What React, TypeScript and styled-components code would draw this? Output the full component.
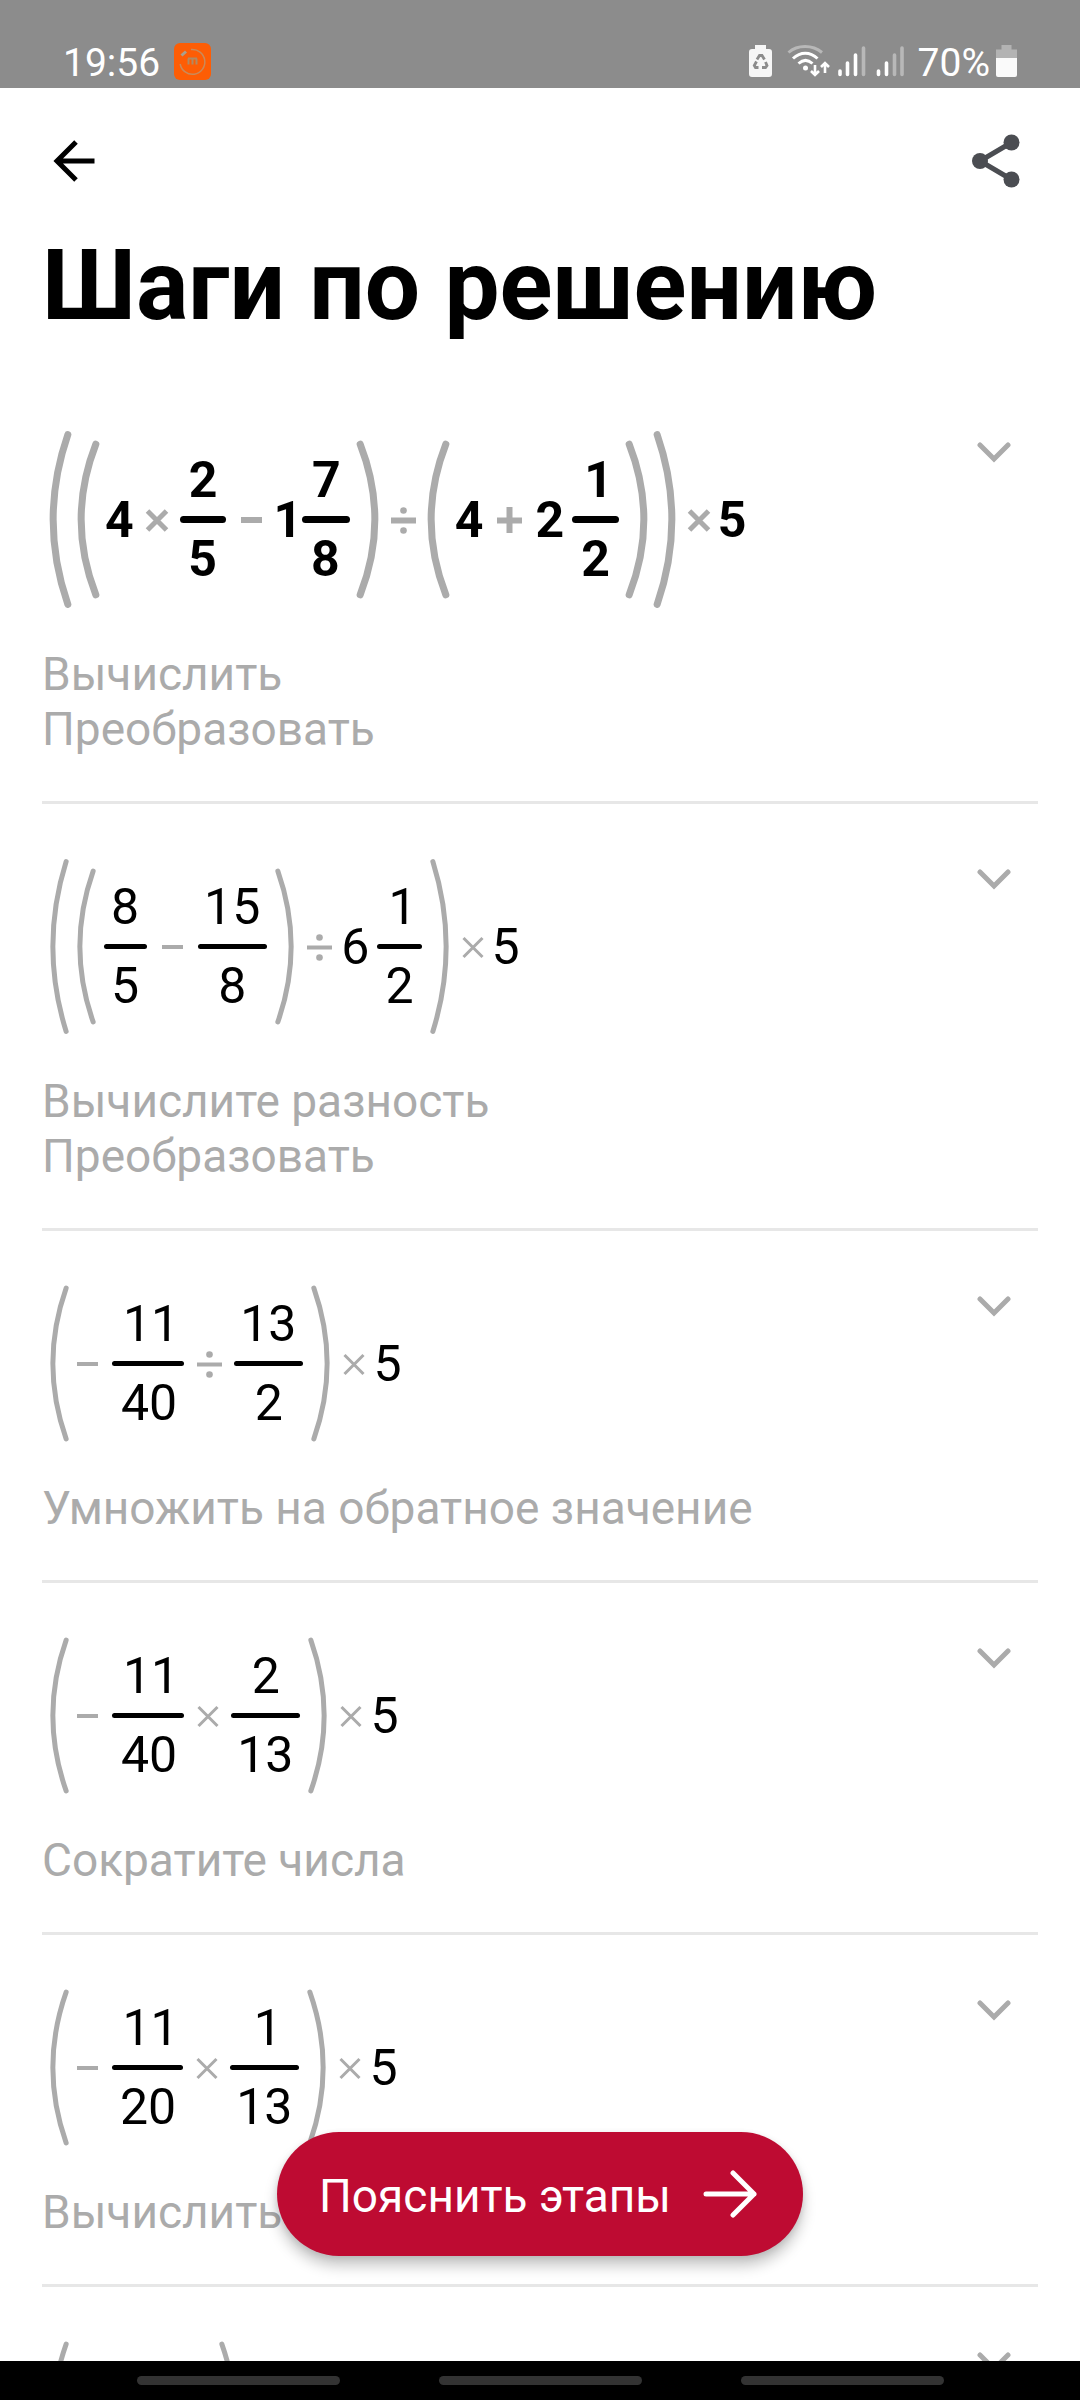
import React from "react";
import styled, { createGlobalStyle, css } from "styled-components";

const GlobalStyle = createGlobalStyle`
  * { box-sizing: border-box; }
  body { margin: 0; background: #fff; font-family: Roboto, "Noto Sans", sans-serif; color: #000; }
  button { border: 0; padding: 0; background: none; font: inherit; color: inherit; cursor: pointer; }
  svg { display: block; flex: none; }
`;

const muted = "#ababab";

const Screen = styled.div`
  position: relative;
  display: flex;
  flex-direction: column;
  height: 100vh;
  overflow: hidden;
`;

const StatusBar = styled.div`
  display: flex;
  flex: none;
  align-items: flex-end;
  justify-content: space-between;
  height: 88px;
  padding: 0 63px;
  background: #8c8c8c;
  color: #fff;
  font-size: 39px;
  line-height: 48px;
`;

const StatusGroup = styled.div`
  display: flex;
  align-items: center;
  height: 54px;
`;

const StatusText = styled.span`
  padding-top: 3px;
`;

const Clock = styled(StatusText)`
  margin-right: 14px;
`;

const Percent = styled(StatusText)`
  margin: 0 6px 0 14px;
`;

const TopBar = styled.header`
  display: flex;
  flex: none;
  align-items: center;
  justify-content: space-between;
  padding: 28px 52px 22px 42px;
`;

const IconButton = styled.button`
  display: flex;
  align-items: center;
  justify-content: center;
  width: 64px;
  height: 90px;
`;

const Content = styled.main`
  flex: 1;
  min-height: 0;
  padding: 0 42px;
  overflow: hidden;
`;

const Title = styled.h1`
  margin: 0;
  padding-bottom: 34px;
  font-size: 98px;
  font-weight: 700;
  line-height: 115px;
`;

const StepList = styled.ol`
  margin: 0;
  padding: 0;
  list-style: none;
`;

const StepItem = styled.li`
  display: flex;
  align-items: flex-start;
  justify-content: space-between;
  padding: 54px 0 44px;
  border-bottom: 3px solid #e7e7e7;
`;

const StepBody = styled.div`
  display: flex;
  flex-direction: column;
  gap: 39px;
`;

const Expand = styled.button`
  width: 88px;
  height: 42px;
  display: flex;
  align-items: center;
  justify-content: center;
`;

const Hint = styled.div`
  color: ${muted};
  font-size: 46px;
  line-height: 55px;
`;

const Expression = styled.div<{ $strong?: boolean }>`
  --stroke: ${(p) => (p.$strong ? "7px" : "5px")};
  --sign-stroke: ${(p) => (p.$strong ? "6px" : "4px")};
  --cross-stroke: ${(p) => (p.$strong ? "5px" : "3px")};
  --bar-gap: ${(p) => (p.$strong ? "7px" : "8px")};
  --bar-overhang: ${(p) => (p.$strong ? "11px" : "10px")};
  --paren-width: ${(p) => (p.$strong ? "21px" : "19px")};
  --paren-gap: ${(p) => (p.$strong ? "7px" : "8px")};
  display: flex;
  align-items: center;
  padding-left: 8px;
  font-size: 50px;
  font-weight: ${(p) => (p.$strong ? 700 : 400)};
  line-height: 58px;
`;

const Group = styled.div`
  display: flex;
  align-items: center;
`;

const GroupInner = styled.div`
  display: flex;
  align-items: center;
  padding: 10px var(--paren-gap);
`;

const Paren = styled.svg`
  align-self: stretch;
  width: var(--paren-width);
  height: auto;
  overflow: visible;
  fill: none;
  stroke: ${muted};
  stroke-linecap: round;
  path {
    stroke-width: var(--stroke);
    vector-effect: non-scaling-stroke;
  }
`;

const Frac = styled.div`
  display: flex;
  flex-direction: column;
  align-items: center;
`;

const FracPart = styled.div`
  padding: 0 var(--bar-overhang);
`;

const FracBar = styled.div`
  align-self: stretch;
  height: var(--stroke);
  margin: var(--bar-gap) 0;
  border-radius: 4px;
  background: #000;
`;

const Digits = styled.span<{ $left: number; $right: number }>`
  display: block;
  margin-left: -${(p) => p.$left}px;
  margin-right: -${(p) => p.$right}px;
`;

const Mixed = styled.div`
  display: flex;
  align-items: center;
  gap: 10px;
`;

const wide = css`
  margin: 0 15px;
`;
const narrow = css`
  margin: 0 12px 0 13px;
`;
const leading = css`
  margin: 0 14px 0 0;
`;

const Operator = styled.svg<{ $wide?: boolean; $leading?: boolean; $cross?: boolean }>`
  ${(p) => (p.$leading ? leading : p.$wide ? wide : narrow)}
  fill: none;
  stroke: ${muted};
  stroke-width: ${(p) => (p.$cross ? "var(--cross-stroke)" : "var(--sign-stroke)")};
  overflow: visible;
`;

const ExplainButton = styled.button`
  position: absolute;
  bottom: 144px;
  left: 50%;
  transform: translateX(-50%);
  display: flex;
  align-items: center;
  gap: 32px;
  height: 124px;
  padding: 0 46px 0 42px;
  border-radius: 62px;
  background: #be0b32;
  color: #fff;
  font-size: 46px;
  line-height: 56px;
  white-space: nowrap;
  box-shadow: 0 10px 14px rgba(0, 0, 0, 0.22), 0 2px 6px rgba(0, 0, 0, 0.1);
`;

const ExplainLabel = styled.span`
  padding-top: 4px;
`;

const NavBar = styled.nav`
  position: relative;
  display: flex;
  flex: none;
  align-items: center;
  justify-content: center;
  gap: 99px;
  height: 39px;
  background: #000;
`;

const NavPill = styled.button`
  width: 203px;
  height: 9px;
  border-radius: 5px;
  background: #333;
`;

/* Side bearings of the digits at 50px, trimmed so that gaps are measured from the ink. */
const bearings: Record<string, [number, number]> = {
  "0": [3, 3],
  "1": [4, 10],
  "2": [2, 2],
  "3": [2, 3],
  "4": [1, 1],
  "5": [4, 3],
  "6": [3, 2],
  "7": [1, 2],
  "8": [3, 2],
};

const Num = ({ v }: { v: string }) => (
  <Digits $left={bearings[v[0]][0]} $right={bearings[v[v.length - 1]][1]}>
    {v}
  </Digits>
);

const Fraction = ({ n, d }: { n: string; d: string }) => (
  <Frac>
    <FracPart>
      <Num v={n} />
    </FracPart>
    <FracBar />
    <FracPart>
      <Num v={d} />
    </FracPart>
  </Frac>
);

const MixedNumber = ({ w, n, d }: { w: string; n: string; d: string }) => (
  <Mixed>
    <Num v={w} />
    <Fraction n={n} d={d} />
  </Mixed>
);

const Parens = ({ children }: { children: React.ReactNode }) => (
  <Group>
    <Paren viewBox="0 0 20 100" preserveAspectRatio="none" aria-hidden="true">
      <path d="M17 2Q-11 50 17 98" />
    </Paren>
    <GroupInner>{children}</GroupInner>
    <Paren viewBox="0 0 20 100" preserveAspectRatio="none" aria-hidden="true">
      <path d="M3 2Q31 50 3 98" />
    </Paren>
  </Group>
);

const Times = () => (
  <Operator $cross width="22" height="24" viewBox="0 0 22 24" role="img" aria-label="×">
    <path d="M1.5 3L20.5 22M20.5 3L1.5 22" />
  </Operator>
);

const Minus = ({ leading }: { leading?: boolean }) => (
  <Operator $wide $leading={leading} width="21" height="24" viewBox="0 0 21 24" role="img" aria-label="−">
    <path d="M0 12H21" />
  </Operator>
);

const Plus = () => (
  <Operator $wide width="25" height="26" viewBox="0 0 25 26" role="img" aria-label="+">
    <path d="M0 13.5H25M12.5 0V26" />
  </Operator>
);

const Divide = () => (
  <Operator width="25" height="28" viewBox="0 0 25 28" role="img" aria-label="÷">
    <path d="M0 14.5H25" />
    <circle cx="12.5" cy="4.5" r="3.3" fill={muted} stroke="none" />
    <circle cx="12.5" cy="24.5" r="3.3" fill={muted} stroke="none" />
  </Operator>
);

type StepData = { strong?: boolean; expression: React.ReactNode; hints: string[] };

const steps: StepData[] = [
  {
    strong: true,
    expression: (
      <>
        <Parens>
          <Parens>
            <Num v="4" />
            <Times />
            <Fraction n="2" d="5" />
            <Minus />
            <MixedNumber w="1" n="7" d="8" />
          </Parens>
          <Divide />
          <Parens>
            <Num v="4" />
            <Plus />
            <MixedNumber w="2" n="1" d="2" />
          </Parens>
        </Parens>
        <Times />
        <Num v="5" />
      </>
    ),
    hints: ["Вычислить", "Преобразовать"],
  },
  {
    expression: (
      <>
        <Parens>
          <Parens>
            <Fraction n="8" d="5" />
            <Minus />
            <Fraction n="15" d="8" />
          </Parens>
          <Divide />
          <MixedNumber w="6" n="1" d="2" />
        </Parens>
        <Times />
        <Num v="5" />
      </>
    ),
    hints: ["Вычислите разность", "Преобразовать"],
  },
  {
    expression: (
      <>
        <Parens>
          <Minus leading />
          <Fraction n="11" d="40" />
          <Divide />
          <Fraction n="13" d="2" />
        </Parens>
        <Times />
        <Num v="5" />
      </>
    ),
    hints: ["Умножить на обратное значение"],
  },
  {
    expression: (
      <>
        <Parens>
          <Minus leading />
          <Fraction n="11" d="40" />
          <Times />
          <Fraction n="2" d="13" />
        </Parens>
        <Times />
        <Num v="5" />
      </>
    ),
    hints: ["Сократите числа"],
  },
  {
    expression: (
      <>
        <Parens>
          <Minus leading />
          <Fraction n="11" d="20" />
          <Times />
          <Fraction n="1" d="13" />
        </Parens>
        <Times />
        <Num v="5" />
      </>
    ),
    hints: ["Вычислить"],
  },
  {
    expression: (
      <>
        <Parens>
          <Minus leading />
          <Fraction n="11" d="260" />
        </Parens>
        <Times />
        <Num v="5" />
      </>
    ),
    hints: [],
  },
];

const AppBadge = () => (
  <svg width="37" height="37" viewBox="0 0 37 37" aria-hidden="true">
    <rect width="37" height="37" rx="6" fill="#fd5d05" />
    <path d="M17 6.6A12.4 12.4 0 1 1 6.2 21" fill="none" stroke="#c98a5a" strokeWidth="1.5" />
    <path d="M7.5 12.5L12 8.5" stroke="#a8a08f" strokeWidth="3" />
    <path d="M14.5 15.5V21.5M18.5 15.5V21.5M22.5 15.5V21.5M14 15.5H23" stroke="#b08a63" strokeWidth="2" fill="none" />
  </svg>
);

const StatusIcons = () => (
  <svg width="155" height="34" viewBox="749 44 155 34" fill="none" aria-hidden="true">
    <path
      fill="#f6f6f6"
      d="M755 45h11v4h3a3 3 0 0 1 3 3v22a3 3 0 0 1-3 3h-17a3 3 0 0 1-3-3V52a3 3 0 0 1 3-3h3z"
    />
    <path
      d="M757 59.5L759.5 55.5H762L764.5 59.5M765.5 62L767 65.5L765.5 67.5H762M758.5 67.5H755.5L754.3 65.5L756.5 61.5"
      stroke="#8c8c8c"
      strokeWidth="2.8"
    />
    <path d="M788.5 52.5C797.5 44.5 812.5 44.5 822 52.5" stroke="#b8b8b8" strokeWidth="3" />
    <path
      d="M793 58.5C800.5 51.5 810 51.5 817.5 58.5M798.5 63.5C803 59.5 808 59.5 812.5 63.5"
      stroke="#fff"
      strokeWidth="3"
    />
    <circle cx="805.5" cy="68" r="2.5" fill="#fff" />
    <path d="M815 65V74.5M811 71L815 75L819 71M825 73V63.5M821 67L825 63L829 67" stroke="#fff" strokeWidth="2.6" />
    <g strokeWidth="3.6" strokeLinecap="round" stroke="#fff">
      <path d="M840 71V74.5M847.5 63V74.5M855.5 55V74.5M878.5 71V74.5M886.5 63V74.5" />
      <path d="M863.5 48V74.5M894.5 55V74.5M902 48V74.5" stroke="#b8b8b8" />
    </g>
  </svg>
);

const Battery = () => (
  <svg width="21" height="33" viewBox="0 0 21 33" aria-hidden="true">
    <path d="M5.5 0h10v4.5H21V13H0V4.5h5.500z" fill="#b3b3b3" />
    <path d="M0 13h21v17a2 2 0 0 1-2 2H2a2 2 0 0 1-2-2z" fill="#fafafa" />
  </svg>
);

const BackIcon = () => (
  <svg width="42" height="42" viewBox="0 0 42 42" fill="none" stroke="#000" strokeWidth="5" aria-hidden="true">
    <path d="M23 2L4 21L23 40M3 21H41.5" />
  </svg>
);

const ShareIcon = () => (
  <svg width="48" height="54" viewBox="0 0 48 54" fill="#4b4d52" aria-hidden="true">
    <path d="M39.5 8.5L8 27L39.5 45.5" fill="none" stroke="#4b4d52" strokeWidth="5" />
    <circle cx="39.5" cy="8.5" r="8" />
    <circle cx="8" cy="27" r="8" />
    <circle cx="39.5" cy="45.5" r="8" />
  </svg>
);

const Chevron = () => (
  <svg
    width="34"
    height="21"
    viewBox="0 0 34 21"
    fill="none"
    stroke={muted}
    strokeWidth="5"
    strokeLinecap="round"
    aria-hidden="true"
  >
    <path d="M3 3L17 17L31 3" />
  </svg>
);

const ArrowIcon = () => (
  <svg
    width="54"
    height="62"
    viewBox="0 0 54 62"
    fill="none"
    stroke="#fff"
    strokeWidth="5"
    strokeLinecap="round"
    strokeLinejoin="round"
    aria-hidden="true"
  >
    <path d="M3 31H51M30 10L51 31L30 52" />
  </svg>
);

export default function App() {
  return (
    <Screen>
      <GlobalStyle />
      <StatusBar>
        <StatusGroup>
          <Clock>19:56</Clock>
          <AppBadge />
        </StatusGroup>
        <StatusGroup>
          <StatusIcons />
          <Percent>70%</Percent>
          <Battery />
        </StatusGroup>
      </StatusBar>
      <TopBar>
        <IconButton aria-label="Назад">
          <BackIcon />
        </IconButton>
        <IconButton aria-label="Поделиться">
          <ShareIcon />
        </IconButton>
      </TopBar>
      <Content>
        <Title>Шаги по решению</Title>
        <StepList>
          {steps.map((step, i) => (
            <StepItem key={i}>
              <StepBody>
                <Expression $strong={step.strong}>{step.expression}</Expression>
                <div>
                  {step.hints.map((hint) => (
                    <Hint key={hint}>{hint}</Hint>
                  ))}
                </div>
              </StepBody>
              <Expand aria-label="Развернуть шаг">
                <Chevron />
              </Expand>
            </StepItem>
          ))}
        </StepList>
      </Content>
      <ExplainButton>
        <ExplainLabel>Пояснить этапы</ExplainLabel>
        <ArrowIcon />
      </ExplainButton>
      <NavBar>
        <NavPill aria-label="Последние" />
        <NavPill aria-label="Домой" />
        <NavPill aria-label="Вернуться" />
      </NavBar>
    </Screen>
  );
}
